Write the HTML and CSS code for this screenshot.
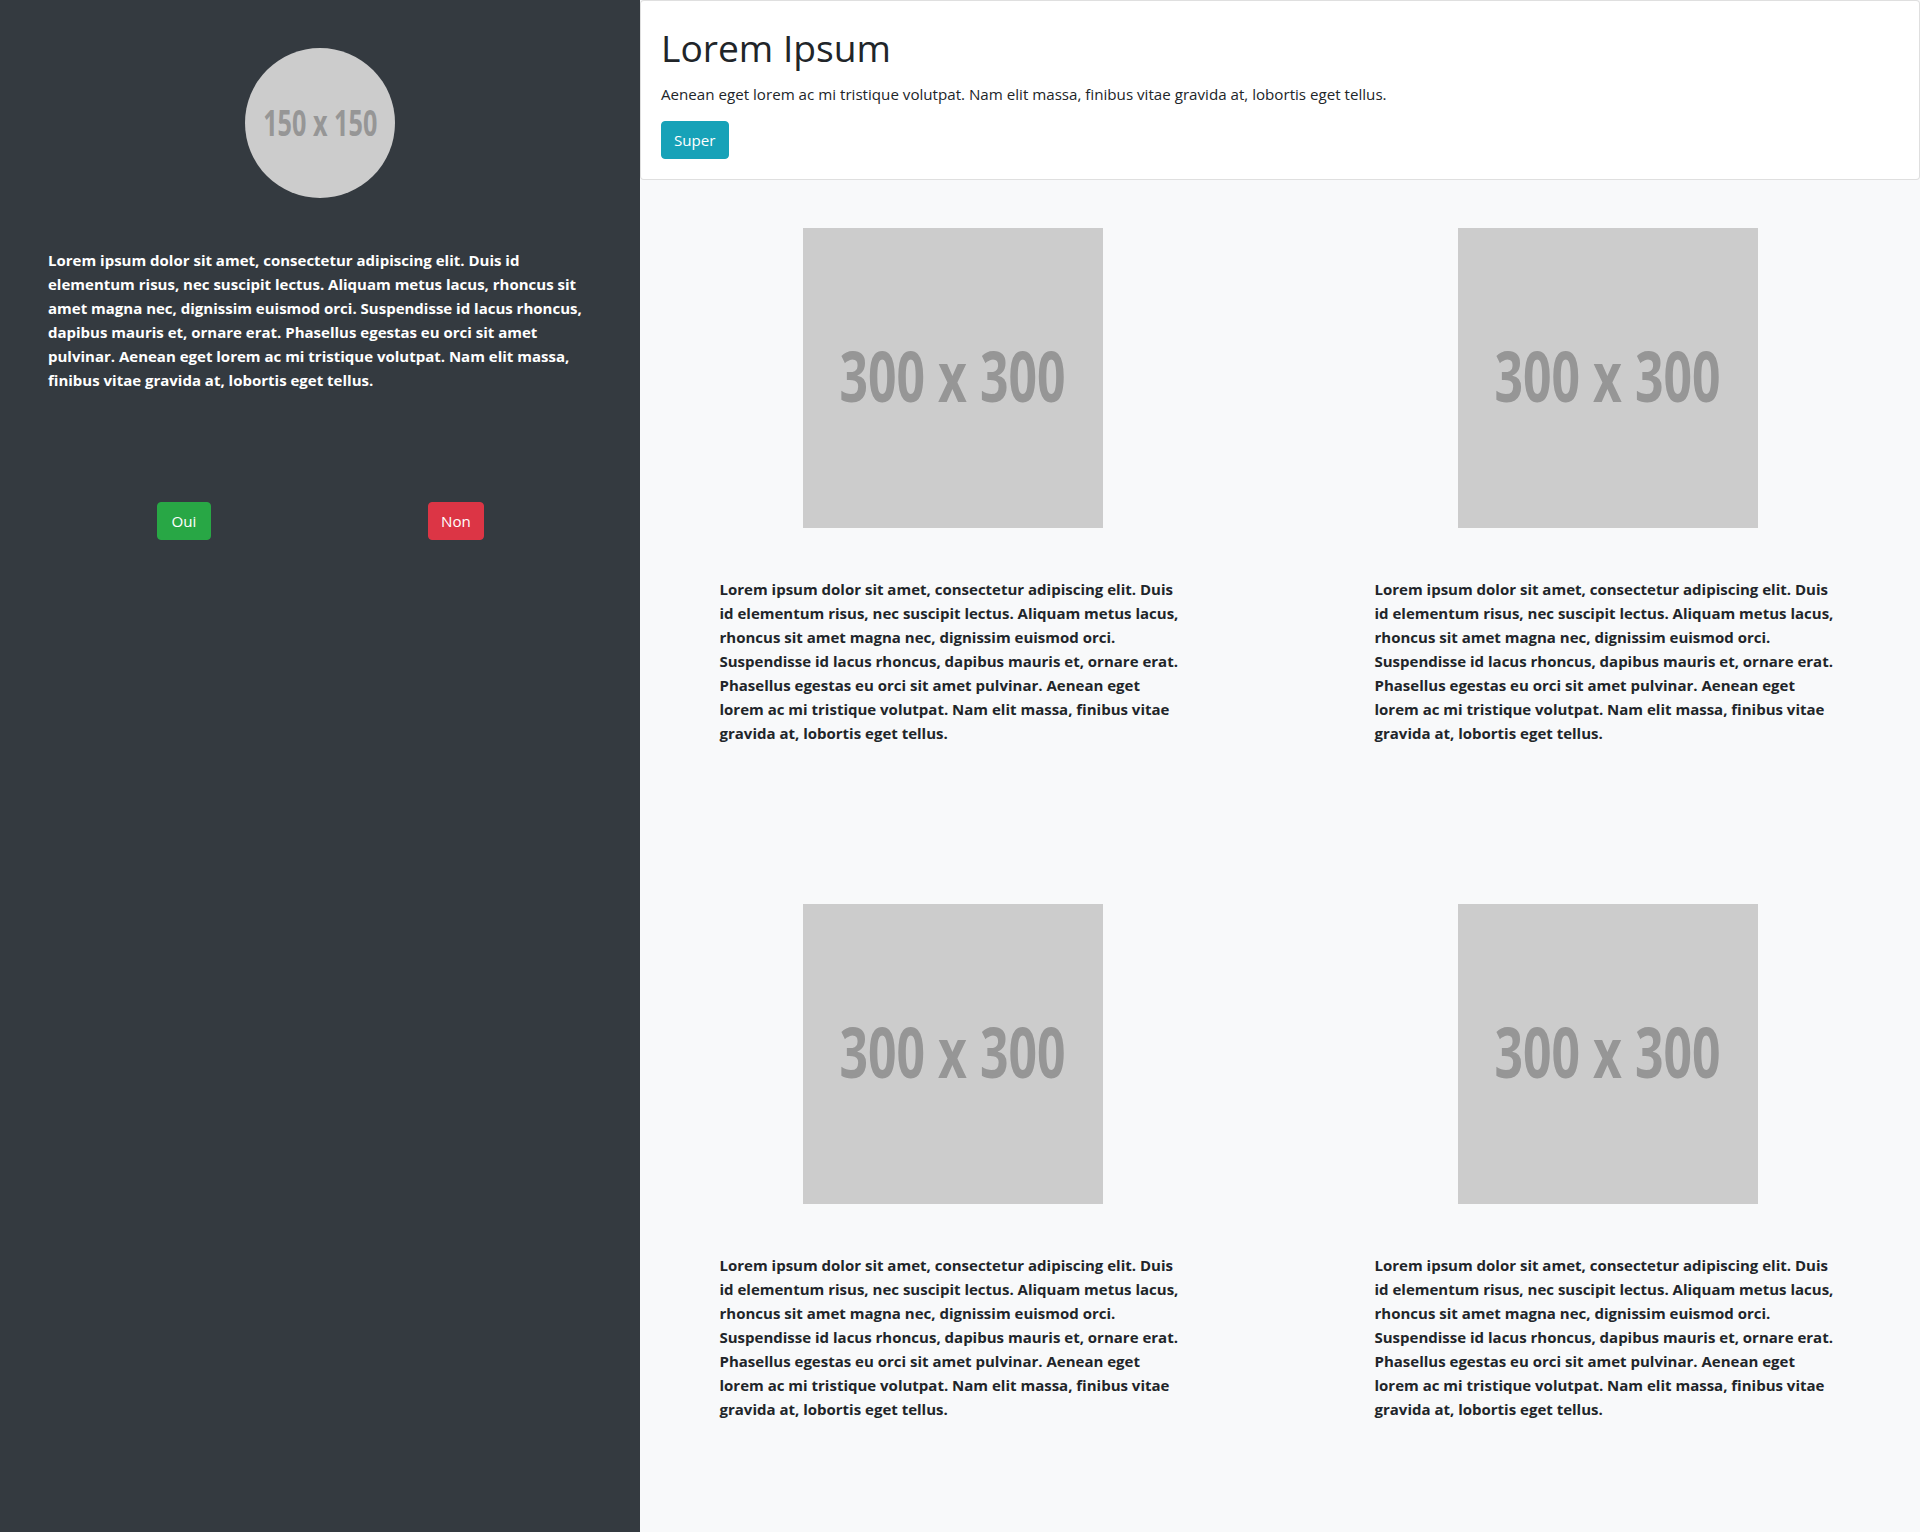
FILE: index.html
```html
<!DOCTYPE html>
<html lang="fr">
<head>
<meta charset="utf-8">
<title>Lorem Ipsum</title>
<link rel="stylesheet" href="styles.css">
</head>
<body>
<div class="layout">
  <aside class="sidebar">
    <div class="avatar"><span class="avatar-label">150 x 150</span></div>
    <p class="bio">Lorem ipsum dolor sit amet, consectetur adipiscing elit. Duis id elementum risus, nec suscipit lectus. Aliquam metus lacus, rhoncus sit amet magna nec, dignissim euismod orci. Suspendisse id lacus rhoncus, dapibus mauris et, ornare erat. Phasellus egestas eu orci sit amet pulvinar. Aenean eget lorem ac mi tristique volutpat. Nam elit massa, finibus vitae gravida at, lobortis eget tellus.</p>
    <div class="choices">
      <div class="choice"><button class="btn btn-success btn-oui">Oui</button></div>
      <div class="choice"><button class="btn btn-danger">Non</button></div>
    </div>
  </aside>
  <main class="main">
    <section class="hero">
      <h1 class="hero-title">Lorem Ipsum</h1>
      <p class="hero-text">Aenean eget lorem ac mi tristique volutpat. Nam elit massa, finibus vitae gravida at, lobortis eget tellus.</p>
      <button class="btn btn-info">Super</button>
    </section>
    <div class="grid">
      <article class="item">
        <div class="thumb"><span class="thumb-label">300 x 300</span></div>
        <p class="item-text">Lorem ipsum dolor sit amet, consectetur adipiscing elit. Duis id elementum risus, nec suscipit lectus. Aliquam metus lacus, rhoncus sit amet magna nec, dignissim euismod orci. Suspendisse id lacus rhoncus, dapibus mauris et, ornare erat. Phasellus egestas eu orci sit amet pulvinar. Aenean eget lorem ac mi tristique volutpat. Nam elit massa, finibus vitae gravida at, lobortis eget tellus.</p>
      </article>
      <article class="item">
        <div class="thumb"><span class="thumb-label">300 x 300</span></div>
        <p class="item-text">Lorem ipsum dolor sit amet, consectetur adipiscing elit. Duis id elementum risus, nec suscipit lectus. Aliquam metus lacus, rhoncus sit amet magna nec, dignissim euismod orci. Suspendisse id lacus rhoncus, dapibus mauris et, ornare erat. Phasellus egestas eu orci sit amet pulvinar. Aenean eget lorem ac mi tristique volutpat. Nam elit massa, finibus vitae gravida at, lobortis eget tellus.</p>
      </article>
      <article class="item">
        <div class="thumb"><span class="thumb-label">300 x 300</span></div>
        <p class="item-text">Lorem ipsum dolor sit amet, consectetur adipiscing elit. Duis id elementum risus, nec suscipit lectus. Aliquam metus lacus, rhoncus sit amet magna nec, dignissim euismod orci. Suspendisse id lacus rhoncus, dapibus mauris et, ornare erat. Phasellus egestas eu orci sit amet pulvinar. Aenean eget lorem ac mi tristique volutpat. Nam elit massa, finibus vitae gravida at, lobortis eget tellus.</p>
      </article>
      <article class="item">
        <div class="thumb"><span class="thumb-label">300 x 300</span></div>
        <p class="item-text">Lorem ipsum dolor sit amet, consectetur adipiscing elit. Duis id elementum risus, nec suscipit lectus. Aliquam metus lacus, rhoncus sit amet magna nec, dignissim euismod orci. Suspendisse id lacus rhoncus, dapibus mauris et, ornare erat. Phasellus egestas eu orci sit amet pulvinar. Aenean eget lorem ac mi tristique volutpat. Nam elit massa, finibus vitae gravida at, lobortis eget tellus.</p>
      </article>
    </div>
  </main>
</div>
</body>
</html>
```
FILE: styles.css
```css
* { box-sizing: border-box; }

html, body {
  margin: 0;
  padding: 0;
}

body {
  font-family: "Open Sans", "Noto Sans", "Liberation Sans", sans-serif;
  color: #212529;
  background: #f8f9fa;
}

.layout {
  display: flex;
  min-height: 1532px;
}

/* ---------- sidebar ---------- */
.sidebar {
  width: 640px;
  flex: 0 0 640px;
  background: #343a40;
  padding: 48px;
  display: flex;
  flex-direction: column;
}

.avatar {
  width: 150px;
  height: 150px;
  border-radius: 50%;
  background: #cccccc;
  margin: 0 auto;
  display: flex;
  align-items: center;
  justify-content: center;
  overflow: hidden;
}

.avatar-label {
  display: inline-block;
  font-weight: 700;
  font-size: 35px;
  line-height: 1;
  color: #969696;
  white-space: nowrap;
  transform: translateY(-1px) scaleX(0.72);
}

.bio {
  margin: 50px 0 0;
  color: #ffffff;
  font-weight: 700;
  font-size: 15px;
  line-height: 24px;
}

.choices {
  display: grid;
  grid-template-columns: 1fr 1fr;
  margin-top: 110px;
}

.choice {
  display: flex;
  justify-content: center;
}

/* ---------- buttons ---------- */
.btn {
  font-family: inherit;
  font-size: 15.15px;
  font-weight: 400;
  line-height: 24px;
  padding: 6px 12px;
  border: 1px solid transparent;
  border-radius: 4px;
  color: #ffffff;
  cursor: pointer;
  display: inline-block;
}

.btn-oui { padding: 6px 14px; }

.btn-success { background: #28a745; border-color: #28a745; }
.btn-danger  { background: #dc3545; border-color: #dc3545; }
.btn-info    { background: #17a2b8; border-color: #17a2b8; }

/* ---------- main ---------- */
.main {
  flex: 1 1 auto;
  background: #f8f9fa;
  min-width: 0;
}

.hero {
  background: #ffffff;
  border: 1px solid rgba(0, 0, 0, 0.125);
  border-radius: 4px;
  padding: 20px;
}

.hero-title {
  margin: 3px 0 10px;
  font-size: 37.2px;
  font-weight: 400;
  line-height: 48px;
  color: #212529;
}

.hero-text {
  margin: 0 0 15px;
  font-size: 15.15px;
  line-height: 24px;
}

.grid {
  display: grid;
  grid-template-columns: 1fr 1fr;
  column-gap: 30px;
}

.item {
  padding: 48px 0 96px;
}

.thumb {
  width: 300px;
  height: 300px;
  margin: 0 auto;
  background: #cccccc;
  display: flex;
  align-items: center;
  justify-content: center;
  overflow: hidden;
}

.thumb-label {
  display: inline-block;
  font-weight: 700;
  font-size: 70px;
  line-height: 1;
  color: #969696;
  white-space: nowrap;
  transform: translateY(-3px) scaleX(0.713);
}

.item-text {
  width: 466px;
  margin: 49px auto 15px;
  font-weight: 700;
  font-size: 15px;
  line-height: 24px;
  color: #212529;
}
```
